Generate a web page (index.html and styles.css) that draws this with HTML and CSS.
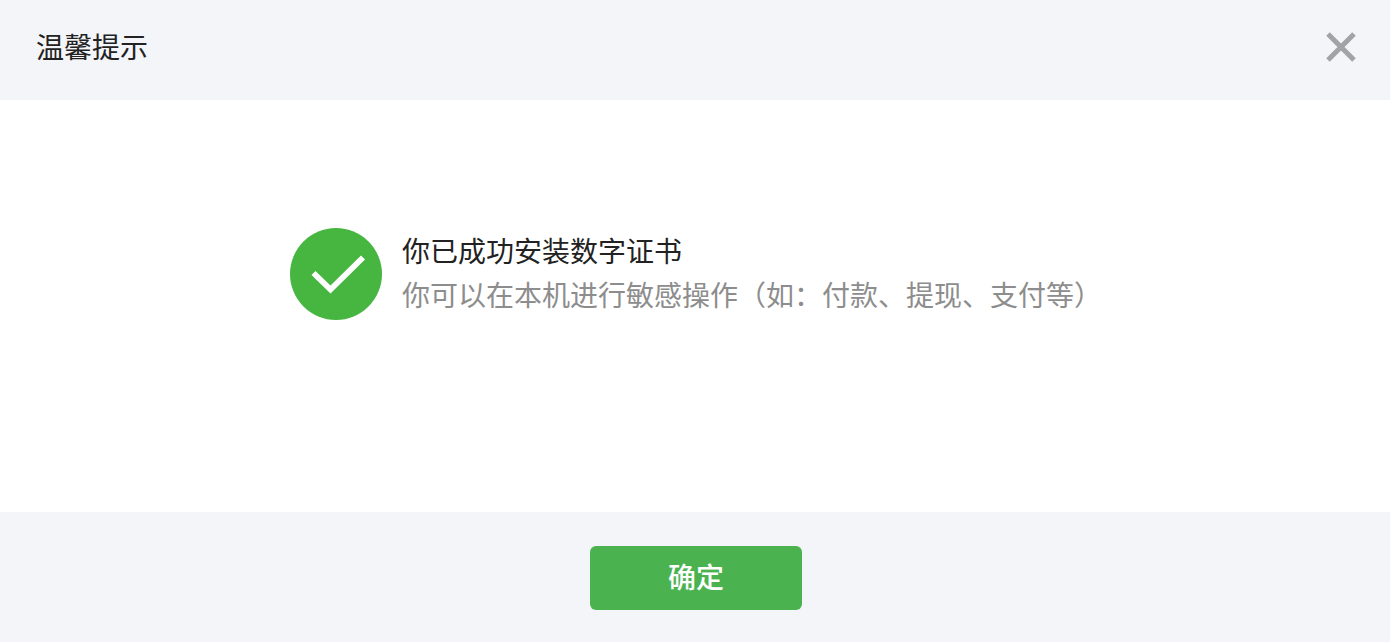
FILE: index.html
```html
<!DOCTYPE html>
<html lang="zh-CN">
<head>
    <meta charset="UTF-8">
    <meta name="viewport" content="width=device-width, initial-scale=1.0">
    <title>温馨提示</title>
    <link rel="stylesheet" href="styles.css">
</head>
<body>
    <div class="dialog">
        <!-- 标题栏 -->
        <div class="dialog-header">
            <h3 class="dialog-title">温馨提示</h3>
            <button class="close" type="button" aria-label="关闭">
                <svg width="32" height="32" viewBox="0 0 32 32">
                    <path d="M3 3l26 26M29 3l-26 26" fill="none" stroke="#a2a2a7" stroke-width="5"/>
                </svg>
            </button>
        </div>

        <!-- 提示内容 -->
        <div class="dialog-body">
            <svg class="icon-success" width="92" height="92" viewBox="0 0 92 92">
                <circle cx="46" cy="46" r="46" fill="#46b640"/>
                <path d="M23.5 45l17 16.5 32.5-32" fill="none" stroke="#fff" stroke-width="5.8"/>
            </svg>
            <div class="message">
                <p class="message-title">你已成功安装数字证书</p>
                <p class="message-desc">你可以在本机进行敏感操作（如：付款、提现、支付等）</p>
            </div>
        </div>

        <!-- 底部按钮 -->
        <div class="dialog-footer">
            <button class="btn-primary" type="button">确定</button>
        </div>
    </div>
</body>
</html>
```
FILE: styles.css
```css
* {
    box-sizing: border-box;
}

body {
    margin: 0;
    font-family: "Noto Sans CJK SC", sans-serif;
    font-size: 28px;
    color: #222;
}

h3,
p {
    margin: 0;
    font-weight: normal;
}

button {
    padding: 0;
    border: none;
    font-family: inherit;
    cursor: pointer;
}

.dialog {
    display: flex;
    flex-direction: column;
    height: 642px;
    background-color: #fff;
}

/* 标题栏 */
.dialog-header {
    display: flex;
    justify-content: space-between;
    align-items: center;
    height: 100px;
    padding: 0 33px 6px 36px;
    background-color: #f4f5f9;
}

.dialog-title {
    padding-bottom: 2px;
    font-size: 28px;
    line-height: 40px;
}

.close {
    height: 32px;
    background: none;
}

.close svg {
    display: block;
}

/* 提示内容 */
.dialog-body {
    display: flex;
    flex: 1;
    align-items: flex-start;
    padding: 128px 0 0 290px;
}

.message {
    margin-left: 20px;
    line-height: 44px;
    white-space: nowrap;
}

.message-desc {
    color: #8d8d8d;
}

/* 底部按钮 */
.dialog-footer {
    display: flex;
    justify-content: center;
    height: 130px;
    padding: 34px 0 0 2px;
    background-color: #f4f5f9;
}

.btn-primary {
    width: 212px;
    height: 64px;
    padding-bottom: 4px;
    border-radius: 6px;
    background-color: #4ab350;
    color: #fff;
    font-size: 28px;
    font-weight: 500;
}
```
